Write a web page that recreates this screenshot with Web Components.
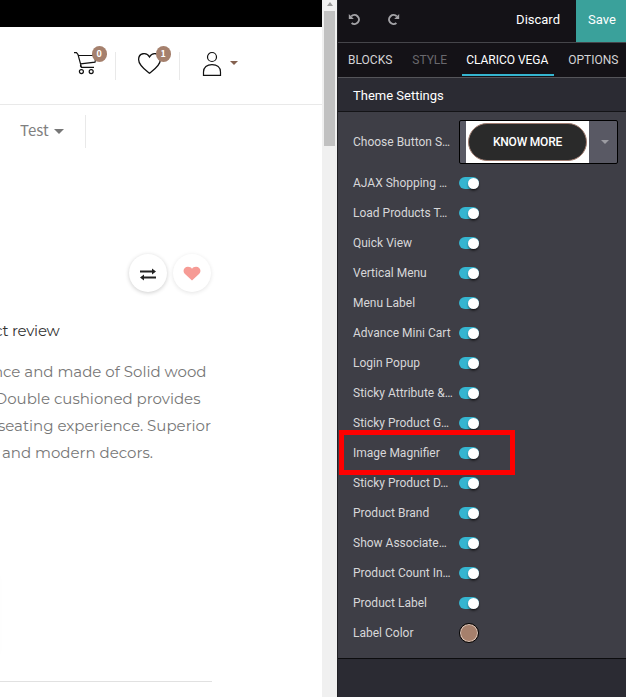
<!DOCTYPE html>
<html lang="en"><head><meta charset="utf-8"><title>Website editor</title>
<style>
html,body{margin:0;height:100%;overflow:hidden}
body{font-family:Roboto,"Liberation Sans",sans-serif;background:#fff}
</style></head><body>
<editor-app></editor-app>
<script>
const define=(name,css,html)=>customElements.define(name,class extends HTMLElement{
  constructor(){super();this.attachShadow({mode:'open'}).innerHTML=`<style>*{box-sizing:border-box}${css}</style>${html}`;}
});

define('count-badge',`:host{position:absolute;top:0;left:18.5px;width:15.5px;height:16px;border-radius:50%;background:#a5806d;color:#fff;font:700 9px/16px "Noto Sans CJK SC",sans-serif;text-align:center}`,`<slot></slot>`);

define('drop-caret',`:host{display:block;width:0;height:0;border:solid transparent;border-width:var(--h,5px) var(--w,5px) 0;border-top-color:currentColor}`,``);

define('shop-header',`
:host{display:block}
.strip{height:27px;background:#000}
.main{height:78px;border-bottom:1px solid #e9e9e9;display:flex;padding:19px 0 0 73px}
.item{position:relative;width:43px;border-right:1px solid #e9e9e9;margin-right:21px;margin-top:6px;height:28px}
.item svg{display:block;overflow:visible}
.item count-badge{top:-6px}
.item.last{border:0;display:flex;margin:6px 0 0}
.last svg{flex:none}
.last drop-caret{margin:9px 0 0 7px;color:#84614f;--w:4.5px;--h:4.5px}
.nav{display:flex;align-items:center;width:86px;height:33px;margin-top:10px;padding-left:20px;border-right:1px solid #e9e9e9;color:#808080;font:15px/30px "Noto Sans CJK SC",sans-serif}
.nav span{width:27px;margin-top:-3px}
.nav drop-caret{margin:-1px 0 0 7px;color:#777}
svg{fill:none;stroke:#111;stroke-width:1.2}`,`
<div class="strip"></div>
<div class="main">
 <div class="item"><svg width="25" height="24"><path d="M1 .7H3.5L5 2.5L8.5 15.3H21M5.5 3.5H23.2L22 10.2L7.6 11.8M8.5 15.3Q6.8 14 8 12"/><circle cx="8.4" cy="19.6" r="2"/><circle cx="18.2" cy="19.6" r="2"/></svg><count-badge>0</count-badge></div>
 <div class="item"><svg width="25" height="24"><path d="M12.5 21.2C8 17.8 1.6 13.5 1.6 7.5C1.6 1 9.5-.5 12.5 5C15.5-.5 23.4 1 23.4 7.5C23.4 13.5 17 17.8 12.5 21.2Z" stroke-width="1.3"/></svg><count-badge>1</count-badge></div>
 <div class="item last"><svg width="22" height="25"><circle cx="11" cy="5" r="4.5"/><path d="M2.5 23.4V20C2.5 15.3 6 12.6 11 12.6S19.5 15.3 19.5 20V23.4Z"/></svg><drop-caret></drop-caret></div>
</div>
<div class="nav"><span>Test</span><drop-caret></drop-caret></div>`);

define('round-button',`:host{display:flex;align-items:center;justify-content:center;width:38px;height:38px;border-radius:50%;background:#fff;box-shadow:0 1px 4px #0003}`,`<slot></slot>`);

define('text-line',`:host{display:flex;justify-content:flex-end;width:var(--end);height:27px;line-height:27px;overflow:hidden;white-space:nowrap}span{flex:none}`,`<span><slot></slot></span>`);

define('product-info',`
:host{display:block;position:relative;flex:1;font:15px Montserrat,Inter,sans-serif}
.actions{display:flex;gap:6px;margin:106px 0 0 129px}
.review{color:#333;margin-top:25px}
.copy{color:#777;margin-top:14px}
.card{width:1px;height:84px;margin:107px 0 0 -2px;box-shadow:0 0 6px #0000000c}
hr{border:0;height:1px;background:#e1e1e1;width:212px;margin:24px 0 0}`,`
<div class="actions">
 <round-button><svg width="18" height="14" style="margin-top:2px"><path d="M1 4.5H14M4 10.5H17" stroke="#222" stroke-width="2"/><path d="M13 1.5L17 4.5L13 7.5ZM5 7.5L1 10.5L5 13.5Z" fill="#222"/></svg></round-button>
 <round-button style="box-shadow:0 1px 4px #0000001c"><svg width="18" height="16" style="margin-top:2px"><path d="M9 14.5L2 8C-1.8 4 2.5-1.2 8 1.6L9 2.7L10 1.6C15.5-1.2 19.8 4 16 8Z" fill="#f69b95"/></svg></round-button>
</div>
<div class="review"><text-line style="--end:59.5px;letter-spacing:-.25px">ct review</text-line></div>
<div class="copy">
<text-line style="--end:206.5px">nce and made of Solid wood</text-line>
<text-line style="--end:200.5px">Double cushioned provides</text-line>
<text-line style="--end:211px">seating experience. Superior</text-line>
<text-line style="--end:153px">and modern decors.</text-line>
</div>
<div class="card"></div><hr>`);

define('scroll-track',`:host{display:flex;flex-direction:column;align-items:center;width:15px;background:#f0f0f0}
.up{border:solid transparent;border-width:0 3.5px 4px;border-bottom-color:#9a9a9a;margin:2px 0 5px}.thumb{width:11px;height:135px;background:#c1c1c1}`,`<div class="up"></div><div class="thumb"></div>`);

define('toggle-switch',`:host{display:flex;justify-content:flex-end;width:20px;height:12px;border-radius:6px;background:#35b5d0}i{width:11px;height:11px;margin-top:.5px;border-radius:50%;background:#fff;box-shadow:0 2px 3px -1px #000}`,`<i></i>`);

define('color-dot',`:host{display:block;width:20px;height:20px;border-radius:50%;border:1px solid #000;background:#a6806c;box-shadow:inset 0 0 0 1px #e0cbc0}`,``);

define('style-select',`:host{display:flex;width:159px;height:44px;border:1px solid #000;border-radius:2px;background:#595964;padding-left:6px}
.pic{width:123px;background:#fff;display:flex;align-items:center;justify-content:center}
.pill{width:119px;height:38px;border-radius:19px;background:#2a2a2a;border:1px solid #a07c70;color:#fff;font:500 12px/36px Roboto,sans-serif;letter-spacing:-.2px;text-align:center}
drop-caret{margin:19px 0 0 12px;color:#9c9ca2;--w:4px;--h:4px}`,`<div class="pic"><div class="pill">KNOW MORE</div></div><drop-caret></drop-caret>`);

define('setting-row',`:host{display:flex;align-items:center;height:30px;padding-left:15px;color:#d7d7d9;font-size:12px}
span{width:106px;white-space:nowrap}`,`<span><slot name="label"></slot></span><slot></slot>`);

define('editor-bar',`:host{display:flex;height:43px;background:#141217;border-bottom:1px solid #45454a;color:#fff;font-size:13px;line-height:39px}
svg{fill:none;stroke:#a3a2a6;stroke-width:2;margin:13px 0 0 10px}svg+svg{margin-left:25px}
.d{margin-left:auto;margin-right:16px}.s{width:50px;padding-left:12px;background:#3aa19b}`,`
<svg width="14" height="14"><path d="M3.2 3.4A4.5 4.5 0 1 1 3.6 10"/><path d="M.8 1V6H5.8Z" fill="#a3a2a6" stroke="none"/></svg>
<svg width="14" height="14"><path d="M9.8 3.4A4.5 4.5 0 1 0 9.4 10"/><path d="M12.2 1V6H7.2Z" fill="#a3a2a6" stroke="none"/></svg>
<span class="d">Discard</span><span class="s">Save</span>`);

define('editor-tabs',`:host{display:flex;height:35px;background:#141217;border-bottom:1px solid #55555a;font-size:12px;line-height:34px;color:#d4d4d6;padding-left:10px}
span{height:33px;white-space:nowrap}.off{color:#69686d;margin:0 15px 0 20px}.on{color:#fff;width:92px;padding-left:4px;letter-spacing:-.02px;border-bottom:2px solid #35b5d0;margin-right:14px}`,`
<span>BLOCKS</span><span class="off">STYLE</span><span class="on">CLARICO VEGA</span><span>OPTIONS</span>`);

define('theme-settings',`:host{display:block}
h2{margin:0;height:34px;background:#2b2b33;border-bottom:1px solid #141417;padding-left:15px;color:#fff;font:13px/35px Roboto,sans-serif}
.body{background:#3e3e46;height:547px;border-bottom:1px solid #0c0c0e;padding-top:8px;position:relative}
.first{height:48px;padding-bottom:4px}
.mark{position:absolute;left:1px;top:318.4px;width:176px;height:44.4px;border:5px solid #fe0000}`,`
<h2>Theme Settings</h2>
<div class="body"><setting-row class="first"><b slot="label" style="font-weight:400">Choose Button S…</b><style-select></style-select></setting-row>
${['AJAX Shopping …','Load Products T…','Quick View','Vertical Menu','Menu Label','Advance Mini Cart','Login Popup','Sticky Attribute &…','Sticky Product G…','Image Magnifier','Sticky Product D…','Product Brand','Show Associate…','Product Count In…','Product Label'].map(t=>`<setting-row><b slot="label" style="font-weight:400">${t.replace('&','&amp;')}</b><toggle-switch></toggle-switch></setting-row>`).join('')}
<setting-row><b slot="label" style="font-weight:400">Label Color</b><color-dot></color-dot></setting-row>
<div class="mark"></div></div>`);

define('editor-app',`:host{display:flex;width:626px;height:697px;overflow:hidden}
.site{width:322px;display:flex;flex-direction:column;overflow:hidden}
.panel{width:289px;border-left:1px solid #202024;background:#2b2b33}`,`
<div class="site"><shop-header></shop-header><product-info></product-info></div>
<scroll-track></scroll-track>
<div class="panel"><editor-bar></editor-bar><editor-tabs></editor-tabs><theme-settings></theme-settings></div>`);
</script></body></html>
